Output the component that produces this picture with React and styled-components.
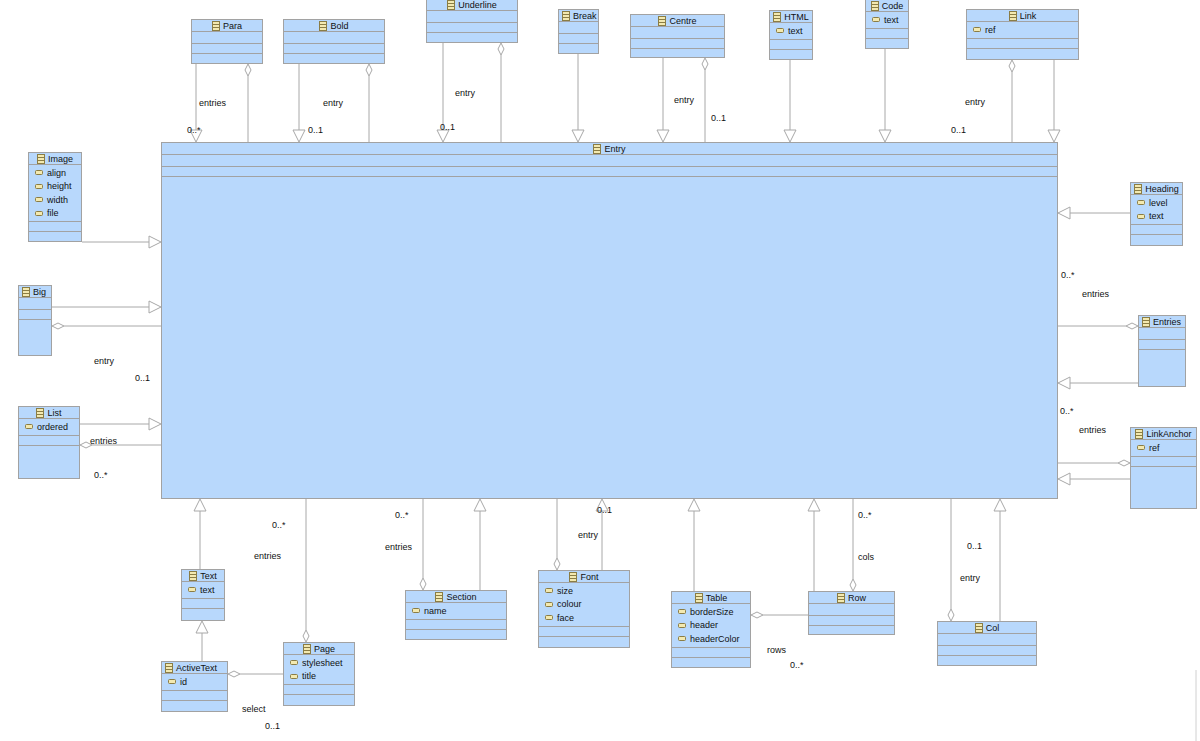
import React from "react";
import styled, { createGlobalStyle } from "styled-components";

const Global = createGlobalStyle`
  html, body { margin: 0; padding: 0; background: #ffffff; }
  body { font-family: "Liberation Sans", Arial, sans-serif; }
`;

const Canvas = styled.div`
  position: relative;
  width: 1200px;
  height: 741px;
  overflow: hidden;
  background: #ffffff;
`;

const Wires = styled.svg`
  position: absolute;
  left: 0;
  top: 0;
`;

const Box = styled.div`
  position: absolute;
  box-sizing: border-box;
  display: flex;
  flex-direction: column;
  background: #b8d8fc;
  border: 1px solid #a2a2a2;
  font-size: 9px;
  color: #111;
`;

const Header = styled.div`
  height: 11px;
  display: flex;
  align-items: center;
  justify-content: ${(p) => (p.$left ? "flex-start" : "center")};
  padding-left: ${(p) => (p.$left ? "3px" : "0")};
  gap: 3px;
  border-bottom: 1px solid #a2a2a2;
  white-space: nowrap;
`;

const Attrs = styled.div`
  min-height: 9px;
  padding: 1px 0 1px 6px;
  border-bottom: 1px solid #a2a2a2;
`;

const AttrRow = styled.div`
  height: 13.5px;
  display: flex;
  align-items: center;
  gap: 4px;
`;

const Compartment = styled.div`
  height: 9px;
  border-bottom: 1px solid #a2a2a2;
`;

const Rest = styled.div`
  flex: 1;
`;

const Label = styled.span`
  position: absolute;
  font-size: 9px;
  color: #111;
  white-space: nowrap;
`;

const ClassIcon = () => (
  <svg width="8" height="10" viewBox="0 0 8 10">
    <rect x="0.5" y="0.5" width="7" height="9" fill="#f3e9b0" stroke="#8a7d45" />
    <line x1="0.5" y1="3.5" x2="7.5" y2="3.5" stroke="#8a7d45" />
    <line x1="0.5" y1="6.5" x2="7.5" y2="6.5" stroke="#8a7d45" />
  </svg>
);

const AttrIcon = () => (
  <svg width="8" height="5" viewBox="0 0 8 5">
    <rect x="0.5" y="0.5" width="7" height="4" rx="1" fill="#f3e9b0" stroke="#8a7d45" />
  </svg>
);

const classes = [
  { n: "Entry", x: 161, y: 142, w: 897, h: 357 },
  { n: "Para", x: 191, y: 19, w: 72, h: 45 },
  { n: "Bold", x: 283, y: 19, w: 102, h: 45 },
  { n: "Underline", x: 426, y: -2, w: 92, h: 45 },
  { n: "Break", x: 558, y: 9, w: 41, h: 45, left: true },
  { n: "Centre", x: 630, y: 14, w: 95, h: 44 },
  { n: "HTML", x: 769, y: 10, w: 44, h: 50, a: ["text"] },
  { n: "Code", x: 865, y: -1, w: 44, h: 50, a: ["text"] },
  { n: "Link", x: 966, y: 9, w: 113, h: 51, a: ["ref"] },
  { n: "Image", x: 28, y: 152, w: 54, h: 90, a: ["align", "height", "width", "file"] },
  { n: "Big", x: 18, y: 285, w: 34, h: 71, left: true },
  { n: "List", x: 18, y: 406, w: 62, h: 73, a: ["ordered"] },
  { n: "Heading", x: 1130, y: 182, w: 53, h: 64, a: ["level", "text"] },
  { n: "Entries", x: 1138, y: 315, w: 48, h: 72, left: true },
  { n: "LinkAnchor", x: 1130, y: 427, w: 67, h: 82, a: ["ref"] },
  { n: "Text", x: 181, y: 569, w: 44, h: 52, a: ["text"] },
  { n: "ActiveText", x: 161, y: 661, w: 67, h: 51, a: ["id"], left: true },
  { n: "Page", x: 283, y: 642, w: 72, h: 64, a: ["stylesheet", "title"] },
  { n: "Section", x: 405, y: 590, w: 102, h: 50, a: ["name"] },
  { n: "Font", x: 538, y: 570, w: 92, h: 78, a: ["size", "colour", "face"] },
  { n: "Table", x: 671, y: 591, w: 80, h: 77, a: ["borderSize", "header", "headerColor"] },
  { n: "Row", x: 808, y: 591, w: 87, h: 44 },
  { n: "Col", x: 937, y: 621, w: 100, h: 45 },
];

// kind: "t" hollow triangle at end, "d" diamond at start
const wires = [
  { p: [196, 64, 196, 142], k: "t" },
  { p: [248, 64, 248, 142], k: "d" },
  { p: [299, 64, 299, 142], k: "t" },
  { p: [369, 64, 369, 142], k: "d" },
  { p: [443, 43, 443, 142], k: "t" },
  { p: [501, 43, 501, 142], k: "d" },
  { p: [578, 54, 578, 142], k: "t" },
  { p: [663, 58, 663, 142], k: "t" },
  { p: [705, 58, 705, 142], k: "d" },
  { p: [790, 60, 790, 142], k: "t" },
  { p: [885, 49, 885, 142], k: "t" },
  { p: [1012, 60, 1012, 142], k: "d" },
  { p: [1054, 60, 1054, 142], k: "t" },
  { p: [82, 242, 161, 242], k: "t" },
  { p: [52, 307, 161, 307], k: "t" },
  { p: [52, 326, 161, 326], k: "d" },
  { p: [80, 424, 161, 424], k: "t" },
  { p: [80, 445, 161, 445], k: "d" },
  { p: [1130, 213, 1058, 213], k: "t" },
  { p: [1138, 326, 1058, 326], k: "d" },
  { p: [1138, 383, 1058, 383], k: "t" },
  { p: [1130, 463, 1058, 463], k: "d" },
  { p: [1130, 479, 1058, 479], k: "t" },
  { p: [200, 569, 200, 499], k: "t" },
  { p: [202, 661, 202, 621], k: "t" },
  { p: [306, 642, 306, 499], k: "d" },
  { p: [228, 674, 283, 674], k: "d" },
  { p: [423, 590, 423, 499], k: "d" },
  { p: [480, 590, 480, 499], k: "t" },
  { p: [557, 570, 557, 499], k: "d" },
  { p: [602, 570, 602, 499], k: "t" },
  { p: [694, 591, 694, 499], k: "t" },
  { p: [751, 615, 808, 615], k: "d" },
  { p: [814, 591, 814, 499], k: "t" },
  { p: [853, 591, 853, 499], k: "d" },
  { p: [951, 621, 951, 499], k: "d" },
  { p: [1000, 621, 1000, 499], k: "t" },
];

const labels = [
  ["entries", 199, 98], ["0..*", 187, 125], ["entry", 323, 98], ["0..1", 308, 125],
  ["entry", 455, 88], ["0..1", 440, 122], ["entry", 674, 95], ["0..1", 711, 113],
  ["entry", 965, 97], ["0..1", 951, 125], ["entry", 94, 356], ["0..1", 135, 373],
  ["entries", 90, 436], ["0..*", 94, 470], ["0..*", 1061, 270], ["entries", 1082, 289],
  ["0..*", 1060, 406], ["entries", 1079, 425], ["0..*", 272, 520], ["entries", 254, 551],
  ["0..*", 395, 510], ["entries", 385, 542], ["0..1", 597, 505], ["entry", 578, 530],
  ["0..*", 858, 510], ["cols", 858, 552], ["rows", 767, 645], ["0..*", 790, 660],
  ["0..1", 967, 541], ["entry", 960, 573], ["select", 242, 704], ["0..1", 265, 721],
];

function Wire({ p, k }) {
  const [x1, y1, x2, y2] = p;
  const len = Math.hypot(x2 - x1, y2 - y1);
  const ux = (x2 - x1) / len;
  const uy = (y2 - y1) / len;
  const nx = -uy;
  const ny = ux;
  const st = "#a8a8a8";
  if (k === "t") {
    const bx = x2 - ux * 12;
    const by = y2 - uy * 12;
    const pts = `${x2},${y2} ${bx + nx * 6},${by + ny * 6} ${bx - nx * 6},${by - ny * 6}`;
    return (
      <g>
        <line x1={x1} y1={y1} x2={bx} y2={by} stroke={st} />
        <polygon points={pts} fill="#ffffff" stroke={st} />
      </g>
    );
  }
  const mx = x1 + ux * 6;
  const my = y1 + uy * 6;
  const ex = x1 + ux * 12;
  const ey = y1 + uy * 12;
  const pts = `${x1},${y1} ${mx + nx * 3},${my + ny * 3} ${ex},${ey} ${mx - nx * 3},${my - ny * 3}`;
  return (
    <g>
      <line x1={ex} y1={ey} x2={x2} y2={y2} stroke={st} />
      <polygon points={pts} fill="#ffffff" stroke={st} />
    </g>
  );
}

function ClassBox({ c }) {
  return (
    <Box style={{ left: c.x, top: c.y, width: c.w, height: c.h }}>
      <Header $left={c.left}>
        <ClassIcon />
        {c.n}
      </Header>
      <Attrs>
        {(c.a || []).map((a) => (
          <AttrRow key={a}>
            <AttrIcon />
            {a}
          </AttrRow>
        ))}
      </Attrs>
      <Compartment />
      <Rest />
    </Box>
  );
}

export default function App() {
  return (
    <Canvas>
      <Global />
      <Wires width="1200" height="741">
        {wires.map((w, i) => (
          <Wire key={i} p={w.p} k={w.k} />
        ))}
        <line x1="1196" y1="670" x2="1196" y2="741" stroke="#d0d0d0" />
      </Wires>
      {classes.map((c) => (
        <ClassBox key={c.n} c={c} />
      ))}
      {labels.map(([t, x, y], i) => (
        <Label key={i} style={{ left: x, top: y }}>
          {t}
        </Label>
      ))}
    </Canvas>
  );
}
